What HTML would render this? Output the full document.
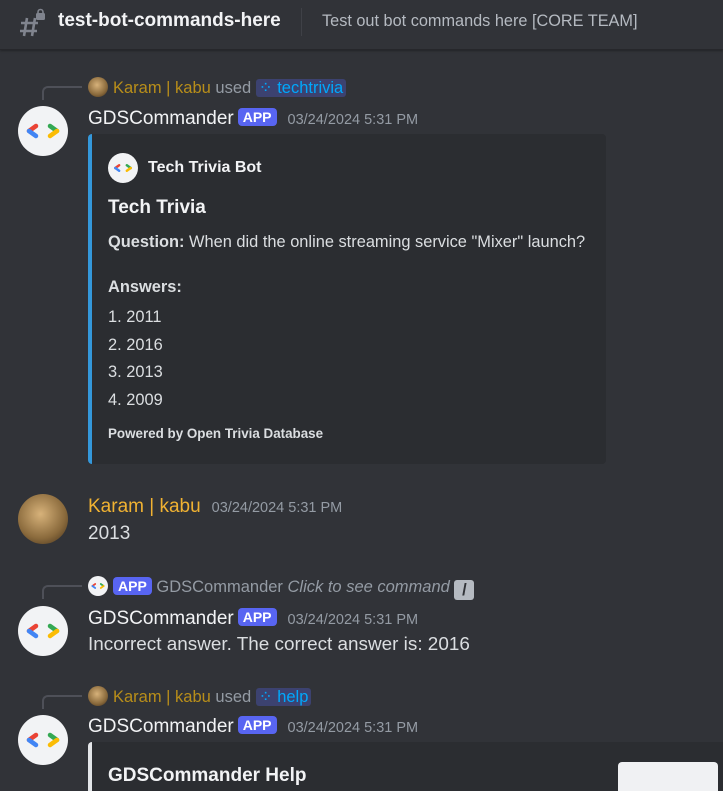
<!DOCTYPE html>
<html style="width:723px;height:791px;overflow:hidden"><head><meta charset="utf-8"><style>
*{margin:0;padding:0;box-sizing:border-box}
body{width:723px;height:791px;overflow:hidden;background:#313338;font-family:"Liberation Sans",sans-serif;color:#dbdee1;position:relative}
.a{position:absolute;white-space:nowrap}
.hdr{position:absolute;left:0;top:0;width:723px;height:50px;background:#313338;border-bottom:1px solid #26272b;box-shadow:0 1px 2px rgba(0,0,0,.3)}
.av{position:absolute;width:50px;height:50px;border-radius:50%;background:#f2f3f5}
.name{font-size:19px;color:#f2f3f5}
.app{display:inline-block;background:#5865f2;color:#fff;font-size:14px;font-weight:bold;padding:1px 5px;border-radius:4px;vertical-align:2px;margin-left:4px}
.ts{font-size:14.5px;color:#949ba4;margin-left:11px}
.rep{font-size:16.5px;color:#949ba4}
.gold{color:#b88e1a}
.cmd{background:#3c4270;color:#00a8fc;padding:0 3px;border-radius:3px}
.spine{position:absolute;border-left:2px solid #4e5058;border-top:2px solid #4e5058;border-top-left-radius:6px;width:40px;height:14px}
.kav{position:absolute;border-radius:50%;background:radial-gradient(circle at 45% 40%,#d7b27a,#8a6a3c 60%,#3b2a18)}
</style></head><body>
<svg width="0" height="0" style="position:absolute"><defs><g id="g"><path d="M-7,-5 L-14,0" stroke="#ea4335" stroke-width="4.5" stroke-linecap="round"/><path d="M-14,0 L-7,5" stroke="#4285f4" stroke-width="4.5" stroke-linecap="round"/><path d="M7,-5 L14,0" stroke="#34a853" stroke-width="4.5" stroke-linecap="round"/><path d="M14,0 L7,5" stroke="#fbbc04" stroke-width="4.5" stroke-linecap="round"/></g></defs></svg>
<div class="hdr"></div>
<svg class="a" style="left:18px;top:8px" width="30" height="30" viewBox="0 0 30 30"><path d="M9 10 L6 28 M17 10 L14 28 M3 15 H20 M2 23 H19" stroke="#80848e" stroke-width="2.6" fill="none"/><rect x="18" y="5" width="9" height="7" rx="1.5" fill="#80848e"/><path d="M20 6 V4 a2.5 2.5 0 0 1 5 0 V6" stroke="#80848e" stroke-width="1.6" fill="none"/></svg>
<div class="a" style="left:58px;top:10px;font-size:19px;font-weight:bold;color:#f2f3f5">test-bot-commands-here</div>
<div class="a" style="left:301px;top:8px;width:1px;height:28px;background:#3f4147"></div>
<div class="a" style="left:322px;top:12px;font-size:16.3px;color:#b5bac1">Test out bot commands here [CORE TEAM]</div>

<div class="spine" style="left:42px;top:86px"></div>
<div class="kav" style="left:88px;top:77px;width:20px;height:20px"></div>
<div class="a rep" style="left:113px;top:78px"><span class="gold">Karam | kabu</span> used <span class="cmd">⁘ techtrivia</span></div>
<div class="av" style="left:18px;top:106px"><svg width="50" height="50"><use href="#g" x="25" y="25"/></svg></div>
<div class="a" style="left:88px;top:108px"><span class="name">GDSCommander</span><span class="app">APP</span><span class="ts">03/24/2024 5:31 PM</span></div>
<div class="a" style="left:88px;top:134px;width:518px;height:330px;background:#2b2d31;border-left:4px solid #3498db;border-radius:4px"></div>
<div class="av" style="left:108px;top:153px;width:30px;height:30px"><svg width="30" height="30"><g transform="translate(15,15) scale(.55)"><use href="#g"/></g></svg></div>
<div class="a" style="left:148px;top:159px;font-size:16px;font-weight:bold;color:#f2f3f5">Tech Trivia Bot</div>
<div class="a" style="left:108px;top:197px;font-size:19px;font-weight:bold;color:#f2f3f5">Tech Trivia</div>
<div class="a" style="left:108px;top:233px;font-size:16.4px"><b>Question:</b> When did the online streaming service "Mixer" launch?</div>
<div class="a" style="left:108px;top:278px;font-size:16.4px;font-weight:bold">Answers:</div>
<div class="a" style="left:108px;top:304px;font-size:16.4px;line-height:27.5px">1. 2011<br>2. 2016<br>3. 2013<br>4. 2009</div>
<div class="a" style="left:108px;top:426px;font-size:13.4px;font-weight:bold;color:#dbdee1">Powered by Open Trivia Database</div>

<div class="kav" style="left:18px;top:494px;width:50px;height:50px"></div>
<div class="a" style="left:88px;top:496px"><span class="name" style="color:#f0b232">Karam | kabu</span><span class="ts">03/24/2024 5:31 PM</span></div>
<div class="a" style="left:88px;top:523px;font-size:19px">2013</div>

<div class="spine" style="left:42px;top:585px"></div>
<div class="av" style="left:88px;top:576px;width:20px;height:20px"><svg width="20" height="20"><g transform="translate(10,10) scale(.4)"><use href="#g"/></g></svg></div>
<div class="a rep" style="left:113px;top:577px"><span class="app" style="margin:0;vertical-align:1px">APP</span> GDSCommander <i>Click to see command</i> <span style="display:inline-block;width:20px;height:20px;background:#b5bac1;border-radius:3px;color:#313338;font-weight:bold;text-align:center;vertical-align:-3px;line-height:20px">/</span></div>
<div class="av" style="left:18px;top:606px"><svg width="50" height="50"><use href="#g" x="25" y="25"/></svg></div>
<div class="a" style="left:88px;top:608px"><span class="name">GDSCommander</span><span class="app">APP</span><span class="ts">03/24/2024 5:31 PM</span></div>
<div class="a" style="left:88px;top:634px;font-size:18.9px">Incorrect answer. The correct answer is: 2016</div>

<div class="spine" style="left:42px;top:695px"></div>
<div class="kav" style="left:88px;top:686px;width:20px;height:20px"></div>
<div class="a rep" style="left:113px;top:687px"><span class="gold">Karam | kabu</span> used <span class="cmd">⁘ help</span></div>
<div class="av" style="left:18px;top:715px"><svg width="50" height="50"><use href="#g" x="25" y="25"/></svg></div>
<div class="a" style="left:88px;top:716px"><span class="name">GDSCommander</span><span class="app">APP</span><span class="ts">03/24/2024 5:31 PM</span></div>
<div class="a" style="left:88px;top:742px;width:635px;height:49px;background:#2b2d31;border-left:4px solid #e3e5e8;border-top-left-radius:4px"></div>
<div class="a" style="left:108px;top:765px;font-size:19px;font-weight:bold;color:#f2f3f5">GDSCommander Help</div>
<div class="a" style="left:618px;top:762px;width:100px;height:29px;background:#f0f1f3;border-radius:4px 4px 0 0"></div>
</body></html>
